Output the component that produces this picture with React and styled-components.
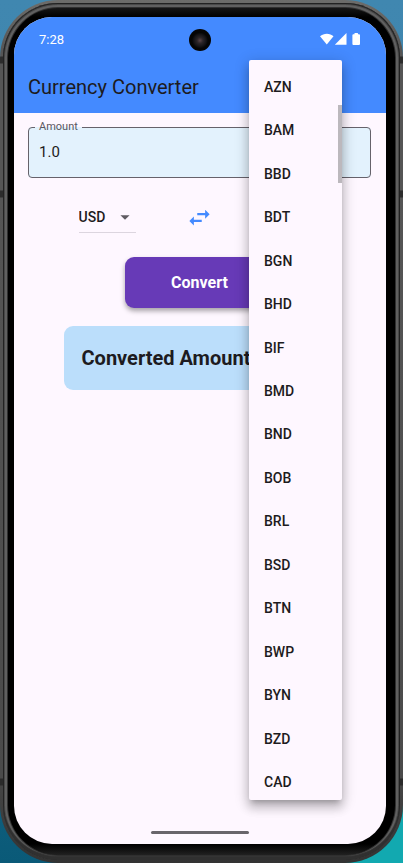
import React, { useState } from "react";
import styled, { createGlobalStyle } from "styled-components";

const CODES = [
  "AZN", "BAM", "BBD", "BDT", "BGN", "BHD", "BIF", "BMD", "BND",
  "BOB", "BRL", "BSD", "BTN", "BWP", "BYN", "BZD", "CAD",
];

const GlobalStyle = createGlobalStyle`
  *, *::before, *::after { box-sizing: border-box; }
  body { margin: 0; font-family: Roboto, sans-serif; color: #1d1b20; }
  button, input, select { font: inherit; color: inherit; }
`;

const Desktop = styled.div`
  min-height: 100vh;
  display: flex;
  background:
    radial-gradient(circle at 100% 100%, #12a9b0 0, #12a9b0 60px, transparent 200px),
    linear-gradient(#4087b0 0, #3f86ae 12%, #0a5a78 100%);
`;

const Rim = styled.div`
  flex: 1;
  display: flex;
  padding: 3px;
  border-radius: 58px;
  background: linear-gradient(
    #6c6c6a 0, #555 6%,
    #555 56px, #2c2c2c 57px, #2c2c2c 63px, #555 64px,
    #555 190px, #2c2c2c 191px, #2c2c2c 197px, #555 198px,
    #4a4a4a 778px, #2a2a2a 779px, #2a2a2a 785px, #444 786px,
    #333 100%
  );
`;

const Bezel = styled.div`
  flex: 1;
  display: flex;
  padding: 14px 14px 16px 11px;
  border-radius: 55px;
  background: linear-gradient(#222 0, #000 14px, #000 calc(100% - 16px), #303030 100%);
  box-shadow:
    inset 0 -4px 1px 0 #303030,
    inset 0 0 0 1px #222,
    inset 0 0 0 2px #484848,
    inset 0 0 0 4px #606060,
    inset 0 0 0 5px #303030;
`;

const Screen = styled.div`
  position: relative;
  flex: 1;
  min-width: 0;
  display: flex;
  flex-direction: column;
  overflow: hidden;
  border-radius: 38px;
  background: #fef7ff;
`;

const Header = styled.header`
  background: #448aff;
`;

const StatusBar = styled.div`
  display: flex;
  align-items: center;
  justify-content: space-between;
  height: 44px;
  padding: 0 25px;
  color: #fff;
  font-size: 13px;
`;

const StatusIcons = styled.div`
  display: flex;
  align-items: center;
`;

const Camera = styled.div`
  position: absolute;
  top: 12px;
  left: 50%;
  width: 22px;
  height: 22px;
  margin-left: -11px;
  border-radius: 50%;
  background: radial-gradient(circle at 50% 52%, #5a4448 0, #2b2528 3px, #151417 6px, #050505 8px);
`;

const Title = styled.h1`
  margin: 0;
  padding: 12px 14px;
  font-size: 20px;
  line-height: 28px;
  font-weight: 400;
`;

const Content = styled.main`
  flex: 1;
  display: flex;
  flex-direction: column;
  align-items: center;
  padding: 7px 15px 0 14px;
`;

const Field = styled.fieldset`
  align-self: stretch;
  min-width: 0;
  margin: 0;
  padding: 0 10px;
  border: 1px solid #66626b;
  border-radius: 4px;
  background: #e3f2fd;
`;

const FieldLegend = styled.legend`
  margin-left: -4px;
  padding: 0 4px;
  font-size: 11px;
  line-height: 14px;
  color: #5a5661;
`;

const FieldInput = styled.input`
  display: block;
  width: 100%;
  height: 43px;
  padding: 0 0 8px;
  border: 0;
  outline: 0;
  background: transparent;
  font-size: 15px;
`;

const CurrencyRow = styled.div`
  align-self: stretch;
  display: flex;
  align-items: center;
  justify-content: space-evenly;
  margin-top: 24px;
`;

const SelectBox = styled.div`
  display: grid;
  grid-template-columns: 1fr 22px;
  align-items: center;
  width: 57px;
  border-bottom: 1px solid #dcd5df;

  svg { grid-area: 1 / 2; pointer-events: none; }
`;

const Select = styled.select`
  grid-area: 1 / 1 / 2 / 3;
  height: 30px;
  padding: 0;
  border: 0;
  outline: 0;
  appearance: none;
  background: transparent;
  font-size: 14px;
  font-weight: 500;
`;

const SwapButton = styled.button`
  display: flex;
  padding: 0;
  border: 0;
  background: none;
  color: #448aff;
`;

const ConvertButton = styled.button`
  width: 150px;
  height: 51px;
  margin-top: 24px;
  border: 0;
  border-radius: 9px;
  background: #673ab7;
  color: #fff;
  font-size: 16px;
  font-weight: 700;
  box-shadow: 0 3px 5px rgba(0, 0, 0, 0.35);
`;

const Result = styled.output`
  min-width: 272px;
  margin-top: 18px;
  padding: 18px;
  border-radius: 9px;
  background: #bbdefb;
  font-size: 20px;
  line-height: 28px;
  font-weight: 700;
  white-space: nowrap;
`;

const HomeBar = styled.div`
  align-self: center;
  width: 98px;
  height: 3px;
  margin-bottom: 10px;
  border-radius: 2px;
  background: #69656b;
`;

const Menu = styled.div`
  position: absolute;
  top: 43px;
  right: 44px;
  bottom: 44px;
  width: 93px;
  display: flex;
  border-radius: 2px;
  background: #fef7ff;
  box-shadow:
    0 5px 5px -3px rgba(0, 0, 0, 0.2),
    0 8px 10px 1px rgba(0, 0, 0, 0.14),
    0 3px 14px 2px rgba(0, 0, 0, 0.16);
`;

const MenuClip = styled.div`
  flex: 1;
  display: flex;
  overflow: hidden;
`;

const MenuList = styled.div`
  flex: 1;
  display: grid;
  grid-auto-rows: 1fr;
  margin: 5px 0 -4px;
`;

const MenuItem = styled.button`
  padding: 0 15px;
  border: 0;
  background: none;
  text-align: left;
  font-size: 14px;
  font-weight: 500;
`;

const ScrollThumb = styled.div`
  position: absolute;
  top: 45px;
  right: 0;
  width: 4px;
  height: 78px;
  background: #bcb8bd;
`;

function CurrencySelect({ label, value, codes, onChange }) {
  return (
    <SelectBox>
      <Select aria-label={label} value={value} onChange={(e) => onChange(e.target.value)}>
        {codes.map((code) => (
          <option key={code}>{code}</option>
        ))}
      </Select>
      <svg width="22" height="22" viewBox="0 0 24 24" fill="#5f5b62" aria-hidden="true">
        <path d="M7 10l5 5 5-5z" />
      </svg>
    </SelectBox>
  );
}

export default function App() {
  const [amount, setAmount] = useState("1.0");
  const [from, setFrom] = useState("USD");
  const [to, setTo] = useState("BDT");
  const all = [...CODES, "USD"];

  const swap = () => {
    setFrom(to);
    setTo(from);
  };

  return (
    <Desktop>
      <GlobalStyle />
      <Rim>
        <Bezel>
          <Screen>
            <Header>
              <StatusBar>
                <span>7:28</span>
                <StatusIcons>
                  <svg width="42" height="14" viewBox="0 0 42 14" fill="#fff" aria-hidden="true">
                    <path d="M1 4.200C4.800.8 11 .8 14.500 4.200L7.800 12.500Z" />
                    <path d="M27.500 1V12.700H15.800Z" />
                    <path d="M35.500 1h3.400v1.300h1.200c.5 0 .9.4.9.9v8.800c0 .5-.4.9-.9.9h-5.800c-.5 0-.9-.4-.9-.9V3.200c0-.5.4-.9.9-.9h1.200z" />
                  </svg>
                </StatusIcons>
              </StatusBar>
              <Title>Currency Converter</Title>
            </Header>
            <Camera />
            <Content>
              <Field>
                <FieldLegend>
                  <label htmlFor="amount">Amount</label>
                </FieldLegend>
                <FieldInput
                  id="amount"
                  inputMode="decimal"
                  value={amount}
                  onChange={(e) => setAmount(e.target.value)}
                />
              </Field>
              <CurrencyRow>
                <CurrencySelect label="From currency" value={from} codes={all} onChange={setFrom} />
                <SwapButton type="button" aria-label="Swap currencies" onClick={swap}>
                  <svg width="27" height="27" viewBox="0 0 24 24" fill="currentColor" aria-hidden="true">
                    <path d="M6.990 11L3 15l3.990 4v-3H14v-2H6.990v-3zM21 9l-3.990-4v3H10v2h7.010v3L21 9z" />
                  </svg>
                </SwapButton>
                <CurrencySelect label="To currency" value={to} codes={all} onChange={setTo} />
              </CurrencyRow>
              <ConvertButton type="button">Convert</ConvertButton>
              <Result>Converted Amount: 0.00</Result>
            </Content>
            <HomeBar />
            <Menu>
              <MenuClip>
                <MenuList role="listbox" aria-label="To currency">
                  {CODES.map((code) => (
                    <MenuItem
                      key={code}
                      type="button"
                      role="option"
                      aria-selected={code === to}
                      onClick={() => setTo(code)}
                    >
                      {code}
                    </MenuItem>
                  ))}
                </MenuList>
              </MenuClip>
              <ScrollThumb />
            </Menu>
          </Screen>
        </Bezel>
      </Rim>
    </Desktop>
  );
}
